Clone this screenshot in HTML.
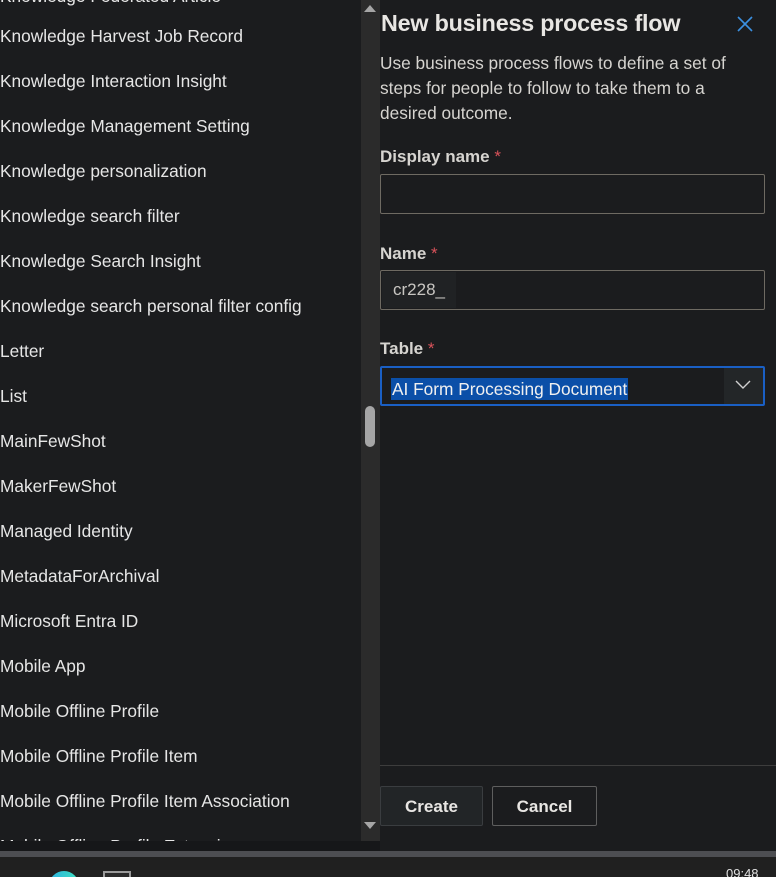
<!DOCTYPE html>
<html><head><style>
html,body{margin:0;width:776px;height:877px;overflow:hidden}
body{background:#1b1c1e;font-family:"Liberation Sans",sans-serif;position:relative}
.list{position:absolute;left:0;top:0;width:361px;height:841px;overflow:hidden;background:#1b1c1e}
.it{position:absolute;left:0;color:#e6e6e6;font-size:17.3px;white-space:nowrap;line-height:20px}
.track{position:absolute;left:361px;top:0;width:19px;height:841px;background:#2b2b2b}
.thumb{position:absolute;left:365px;top:406px;width:10px;height:41px;border-radius:5px;background:#a6a6a6}
.panel{position:absolute;left:380px;top:0;width:396px;height:851px;background:#1b1c1e}
.t{position:absolute;color:#e8e6e3}
.lab{position:absolute;left:0;font-size:17px;font-weight:bold;color:#d6d4d0}
.lab span{color:#d9525a;font-weight:normal}
.inp{position:absolute;left:0;width:385px;height:40px;border:1px solid #6e6a62;border-radius:2px;box-sizing:border-box}
.btn{position:absolute;top:786px;height:40px;box-sizing:border-box;border:1px solid #5a5a5a;border-radius:2px;color:#e8e6e3;font-size:17px;font-weight:bold;text-align:center;line-height:40px}
</style></head><body>
<div class="list">
<div class="it" style="top:-14px">Knowledge Federated Article</div>
<div class="it" style="top:26px">Knowledge Harvest Job Record</div>
<div class="it" style="top:71px">Knowledge Interaction Insight</div>
<div class="it" style="top:116px">Knowledge Management Setting</div>
<div class="it" style="top:161px">Knowledge personalization</div>
<div class="it" style="top:206px">Knowledge search filter</div>
<div class="it" style="top:251px">Knowledge Search Insight</div>
<div class="it" style="top:296px">Knowledge search personal filter config</div>
<div class="it" style="top:341px">Letter</div>
<div class="it" style="top:386px">List</div>
<div class="it" style="top:431px">MainFewShot</div>
<div class="it" style="top:476px">MakerFewShot</div>
<div class="it" style="top:521px">Managed Identity</div>
<div class="it" style="top:566px">MetadataForArchival</div>
<div class="it" style="top:611px">Microsoft Entra ID</div>
<div class="it" style="top:656px">Mobile App</div>
<div class="it" style="top:701px">Mobile Offline Profile</div>
<div class="it" style="top:746px">Mobile Offline Profile Item</div>
<div class="it" style="top:791px">Mobile Offline Profile Item Association</div>
<div class="it" style="top:836px">Mobile Offline Profile Extension</div>
</div>
<div style="position:absolute;left:0;top:841px;width:380px;height:10px;background:#161719"></div>
<div class="track"></div>
<div style="position:absolute;left:364px;top:5px;width:0;height:0;border-left:6px solid transparent;border-right:6px solid transparent;border-bottom:7px solid #a6a6a6"></div>
<div style="position:absolute;left:364px;top:822px;width:0;height:0;border-left:6px solid transparent;border-right:6px solid transparent;border-top:7px solid #a6a6a6"></div>
<div class="thumb"></div>
<div class="panel">
<div class="t" style="left:1px;top:10px;font-size:23.3px;font-weight:bold;letter-spacing:-0.2px">New business process flow</div>
<svg style="position:absolute;left:357px;top:16px" width="16" height="16"><path d="M1 1L15 15M15 1L1 15" stroke="#3b8fe0" stroke-width="1.6"/></svg>
<div class="t" style="left:0;top:51px;width:370px;font-size:17.3px;line-height:25px;color:#d6d4d0">Use business process flows to define a set of steps for people to follow to take them to a desired outcome.</div>
<div class="lab" style="top:147px">Display name <span>*</span></div>
<div class="inp" style="top:174px"></div>
<div class="lab" style="top:244px">Name <span>*</span></div>
<div class="inp" style="top:270px"><div style="position:absolute;left:1px;top:1px;width:74px;height:36px;background:#202224;color:#c8c6c2;font-size:17px;line-height:36px;padding-left:11px;box-sizing:border-box">cr228_</div></div>
<div class="lab" style="top:339px">Table <span>*</span></div>
<div class="inp" style="top:366px;height:40px;border:2px solid #1a5fc4">
<div style="position:absolute;left:9px;top:10px;height:22px;background:#0b4fa8;color:#f0f0f0;font-size:17.3px;line-height:22px;padding:0 1px">AI Form Processing Document</div>
<div style="position:absolute;right:0;top:0;width:39px;height:36px;background:#232628"></div>
<svg style="position:absolute;right:12px;top:12px" width="16" height="10"><path d="M1 1L8 8L15 1" fill="none" stroke="#d0d0d0" stroke-width="1.4"/></svg>
</div>
<div style="position:absolute;left:0;top:765px;width:396px;height:1px;background:#3d3d3d"></div>
</div>
<div class="btn" style="left:380px;width:103px;background:#222527;border-color:#3a3d40">Create</div>
<div class="btn" style="left:492px;width:105px;border-color:#5e5e5e">Cancel</div>
<div style="position:absolute;left:0;top:851px;width:776px;height:6px;background:#4d4e52"></div>
<div style="position:absolute;left:0;top:857px;width:776px;height:20px;background:#202020;overflow:hidden">
<div style="position:absolute;left:49px;top:14px;width:30px;height:30px;border-radius:50%;background:linear-gradient(90deg,#2bb0e0,#3de0c0)"></div>
<div style="position:absolute;left:103px;top:14px;width:28px;height:10px;border:2px solid #9a9a9a;box-sizing:border-box;background:#2a2a2a"></div>
<div style="position:absolute;left:726px;top:9px;color:#e0e0e0;font-size:13px">09:48</div>
</div>
</body></html>
